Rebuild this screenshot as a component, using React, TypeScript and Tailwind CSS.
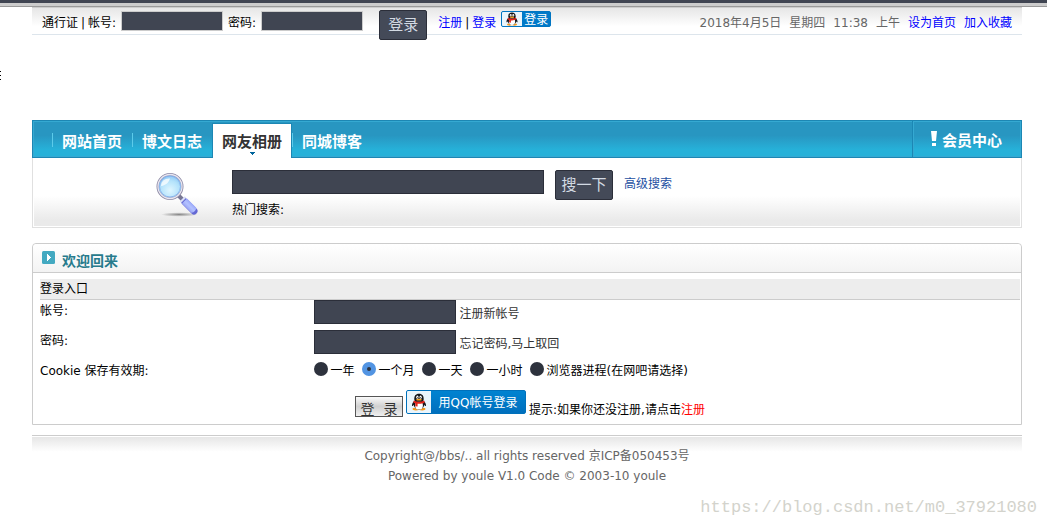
import React from "react";

interface NavItem {
  label: string;
  active?: boolean;
}

const NAV_ITEMS: NavItem[] = [
  { label: "网站首页" },
  { label: "博文日志" },
  { label: "网友相册", active: true },
  { label: "同城博客" },
];

const COOKIE_OPTIONS = [
  { value: "year", label: "一年" },
  { value: "month", label: "一个月" },
  { value: "day", label: "一天" },
  { value: "hour", label: "一小时" },
  { value: "session", label: "浏览器进程(在网吧请选择)" },
];

const Penguin: React.FC<{ className?: string }> = ({ className }) => (
  <svg viewBox="0 0 18 20" className={className} aria-hidden="true">
    <ellipse cx="5.5" cy="18" rx="3.8" ry="1.6" fill="#f39a1e" />
    <ellipse cx="12.5" cy="18" rx="3.8" ry="1.6" fill="#f39a1e" />
    <path d="M3.5 9C1.8 10.6.8 12.8 1.2 14.6c.8.2 1.6-.8 2.2-1.8zM14.5 9c1.7 1.6 2.7 3.8 2.3 5.6-.8.2-1.6-.8-2.2-1.8z" fill="#15171c" />
    <ellipse cx="9" cy="12.5" rx="6" ry="6.2" fill="#15171c" />
    <ellipse cx="9" cy="13.8" rx="4.4" ry="4.7" fill="#fff" />
    <path d="M3.8 8C3.2 3 5.3.6 9 .6S14.8 3 14.2 8c-1 2.2-9.4 2.2-10.4 0z" fill="#15171c" />
    <ellipse cx="7.2" cy="4.6" rx="1.3" ry="1.8" fill="#fff" />
    <ellipse cx="10.8" cy="4.6" rx="1.3" ry="1.8" fill="#fff" />
    <circle cx="7.6" cy="4.9" r=".6" fill="#111" />
    <circle cx="10.4" cy="4.9" r=".6" fill="#111" />
    <ellipse cx="9" cy="7.4" rx="3.2" ry="1" fill="#f6a623" />
    <path d="M3.2 8.3c3.4 2 8.2 2 11.6 0l.6 2.2c-2.4 1.4-5.4 1.8-8 1.5v3.2l-2.6-.4.1-3.3c-.8-.3-1.6-.6-2.3-1z" fill="#e2231a" />
  </svg>
);

const Magnifier: React.FC = () => (
  <svg viewBox="0 0 46 46" className="h-[46px] w-[46px]" aria-hidden="true">
    <defs>
      <radialGradient id="glass" cx=".5" cy=".65" r=".65">
        <stop offset="0" stopColor="#dff6ff" />
        <stop offset=".6" stopColor="#b3e2fb" />
        <stop offset="1" stopColor="#82bdf0" />
      </radialGradient>
      <radialGradient id="shade">
        <stop offset="0" stopColor="#888" />
        <stop offset="1" stopColor="#888" stopOpacity="0" />
      </radialGradient>
      <linearGradient id="grip" x1="0" y1="1" x2="1" y2="0">
        <stop offset="0" stopColor="#6a6ee0" />
        <stop offset=".5" stopColor="#b4c2ff" />
        <stop offset="1" stopColor="#6a78ee" />
      </linearGradient>
    </defs>
    <ellipse cx="25" cy="42.5" rx="18" ry="2.2" fill="url(#shade)" />
    <path d="M24.5 23.5l5 5" stroke="#777793" strokeWidth="4" />
    <path d="M30.5 29.5l9.500 9.500" stroke="#6468d4" strokeWidth="7" strokeLinecap="round" />
    <path d="M28 31.5l5-5 9 9c1.400 1.600-3.400 6.400-5 5z" fill="url(#grip)" />
    <path d="M26.5 30l5-5" stroke="#d9def5" strokeWidth="2" />
    <circle cx="16" cy="14.5" r="12.3" fill="url(#glass)" stroke="#8d8aa5" strokeWidth="2.4" />
    <circle cx="16" cy="14.5" r="12" fill="none" stroke="#e9e7f2" strokeWidth="1.3" />
    <circle cx="16" cy="14.5" r="10.5" fill="none" stroke="#7fa8e8" strokeWidth=".8" />
    <path d="M7 14c0-5 4-8 9-7.500-1 3.500-4 7-9 7.500z" fill="#fff" opacity=".75" />
  </svg>
);

const TopBar: React.FC = () => (
  <div className="flex h-7 items-start justify-between border-t border-b border-t-[#ccc] border-b-[#dde5ec] bg-linear-to-b from-[#e6e6e6] to-white to-70% px-2.5 leading-5">
    <form className="flex items-start pt-[3px]">
      <div className="flex gap-[3px] pt-0.5">
        <span>通行证</span>
        <span>|</span>
        <label htmlFor="top-user">帐号:</label>
      </div>
      <input id="top-user" type="text" className="mx-[5px] h-5 w-[102px] border border-[#ccc] bg-[#404552] px-1 text-white outline-none" />
      <label htmlFor="top-pass" className="pt-0.5">密码:</label>
      <input id="top-pass" type="password" className="ml-[5px] h-5 w-[102px] border border-[#ccc] bg-[#404552] px-1 text-white outline-none" />
      <button type="button" className="ml-4 -mt-px h-[30px] w-12 rounded-xs border border-[#2b2e39] bg-[#444a58] text-[15px] text-[#d3dae3]">
        登录
      </button>
      <div className="ml-[11px] flex gap-[3px] pt-0.5">
        <a href="#" className="text-[#00f]">注册</a>
        <span>|</span>
        <a href="#" className="text-[#00f]">登录</a>
      </div>
      <a href="#" className="ml-[5px] flex h-4 w-[50px] overflow-hidden rounded-xs border border-[#0075c2] bg-[#0079c8] text-white">
        <span className="flex w-5 items-end justify-center bg-[#eaf5fc]">
          <Penguin className="h-3.5 w-4" />
        </span>
        <span className="flex-1 text-center leading-4">登录</span>
      </a>
    </form>
    <div className="flex gap-2 pt-[5px] text-[#666]">
      <span>2018年4月5日</span>
      <span>星期四</span>
      <span>11:38</span>
      <span>上午</span>
      <a href="#" className="text-[#00f]">设为首页</a>
      <a href="#" className="text-[#00f]">加入收藏</a>
    </div>
  </div>
);

const NavBar: React.FC = () => (
  <nav className="flex h-[38px] justify-between border border-[#1c87b4] bg-linear-to-b from-[#2896c1] from-40% to-[#26b1d9] to-80% text-[15px] font-bold text-white inset-shadow-[0_0_0_1px_#35a9d2]">
    <div className="flex pl-[19px]">
      {NAV_ITEMS.map((item) =>
        item.active ? (
          <a
            key={item.label}
            href="#"
            className="relative mt-0.5 -mb-px w-20 border border-b-0 border-[#1c87b4] bg-white pt-2 text-center leading-5 text-[#333]"
          >
            {item.label}
            <svg viewBox="0 0 5 3" className="absolute top-7 left-[37px] h-[3px] w-[5px]" aria-hidden="true">
              <path d="M0 0h5v1H4v1H3v1H2V2H1V1H0z" fill="#00649c" />
            </svg>
          </a>
        ) : (
          <a key={item.label} href="#" className="mt-3 h-3.5 w-20 border-l border-[#5ccbea] pl-[9px] leading-5">
            <span className="-mt-px block">{item.label}</span>
          </a>
        )
      )}
    </div>
    <a href="#" className="flex w-[109px] gap-1 border-l border-[#1c87b4] pt-2.5 pl-[17px] leading-5 inset-shadow-[0_0_0_1px_#35a9d2]">
      <svg viewBox="0 0 8 16" className="h-4 w-2" aria-hidden="true">
        <path d="M1 0h6l-1 10H2zM2 12h4v3H2z" fill="#fff" />
      </svg>
      会员中心
    </a>
  </nav>
);

const SearchPanel: React.FC = () => (
  <form className="flex h-[70px] items-start border border-t-0 border-[#e0e0e0] bg-linear-to-b from-white from-55% to-[#eaeaea] to-90% pl-[121px] inset-shadow-[0_0_0_1px_#fff]">
    <div className="mt-3.5">
      <Magnifier />
    </div>
    <div className="mt-3 ml-8">
      <input type="text" aria-label="搜索" className="block h-6 w-78 border border-[#2b2e39] bg-[#404552] px-1 text-white outline-none" />
      <p className="mt-1.5 leading-5">热门搜索:</p>
    </div>
    <button type="button" className="mt-3 ml-[11px] h-[30px] w-[58px] rounded-xs border border-[#2b2e39] bg-[#444a58] text-[15px] text-[#d3dae3]">
      搜一下
    </button>
    <a href="#" className="mt-4 ml-[11px] leading-5 text-[#1e50a2]">高级搜索</a>
  </form>
);

const LoginPanel: React.FC = () => (
  <section className="mt-[15px] rounded-t-sm border border-[#ccc]">
    <h2 className="flex h-[29px] gap-[7px] rounded-t-sm border-b border-[#ccc] bg-linear-to-b from-white to-[#f3f3f3] pl-[9px] text-[14px] font-bold text-[#277b8c]">
      <svg viewBox="0 0 13 13" className="mt-[7px] h-[13px] w-[13px]" aria-hidden="true">
        <rect width="13" height="13" rx="1.5" fill="#43a9c1" />
        <path d="M5 3h1v1h1v1h1v1h1v1H8v1H7v1H6v1H5z" fill="#fff" />
      </svg>
      <span className="pt-[7px] leading-5">欢迎回来</span>
    </h2>
    <form className="mt-1.5 mr-px ml-[7px]">
      <table className="w-full table-fixed border-separate border-spacing-0 leading-5">
        <colgroup>
          <col className="w-[28%]" />
          <col />
        </colgroup>
        <thead>
          <tr>
            <th colSpan={2} className="h-[21px] border-b border-[#ccc] bg-[#ededed] p-0 pt-px text-left leading-[19px] font-normal">
              登录入口
            </th>
          </tr>
        </thead>
        <tbody>
          <tr className="h-[30px]">
            <td className="p-0 pt-px align-top">
              <label htmlFor="user">帐号:</label>
            </td>
            <td className="p-0 align-top">
              <div className="flex gap-[3px] text-[#333]">
                <input id="user" type="text" className="h-6 w-[142px] border border-[#2b2e39] bg-[#404552] px-1 text-white outline-none" />
                <a href="#" className="pt-1">注册新帐号</a>
              </div>
            </td>
          </tr>
          <tr className="h-[30px]">
            <td className="p-0 pt-px align-top">
              <label htmlFor="pass">密码:</label>
            </td>
            <td className="p-0 align-top">
              <div className="flex gap-[3px] text-[#333]">
                <input id="pass" type="password" className="h-6 w-[142px] border border-[#2b2e39] bg-[#404552] px-1 text-white outline-none" />
                <a href="#" className="pt-1">忘记密码,马上取回</a>
              </div>
            </td>
          </tr>
          <tr className="h-6">
            <td className="p-0 pt-px align-top">Cookie 保存有效期:</td>
            <td className="p-0 pt-px align-top">
              <div className="flex gap-2">
                {COOKIE_OPTIONS.map((option) => (
                  <label key={option.value} className="flex gap-0.5">
                    <input
                      type="radio"
                      name="cookie"
                      value={option.value}
                      defaultChecked={option.value === "month"}
                      className="mt-px h-3.5 w-3.5 appearance-none rounded-full bg-[#2d323d] checked:border-[5px] checked:border-[#5294e2]"
                    />
                    {option.label}
                  </label>
                ))}
              </div>
            </td>
          </tr>
          <tr className="h-10">
            <td colSpan={2} className="p-0 align-top">
              <div className="flex justify-center gap-[3px] pt-1.5">
                <button type="button" className="mt-1.5 h-[21px] w-12 border border-[#555] bg-linear-to-b from-[#fafafa] via-[#d0d0d0] to-[#f0f0f0] pt-0.5 text-[14px] leading-5 whitespace-pre text-[#333]">
                  {"登  录"}
                </button>
                <a href="#" className="flex h-6 w-30 overflow-hidden rounded-xs border border-[#0071bb] bg-linear-to-b from-[#0083d1] to-[#006fbd] text-white">
                  <span className="flex w-6 items-center justify-center bg-[#eaf5fc]">
                    <Penguin className="h-[18px] w-4" />
                  </span>
                  <span className="flex-1 text-center leading-6">用QQ帐号登录</span>
                </a>
                <span className="pt-2.5">
                  提示:如果你还没注册,请点击<a href="#" className="text-[#f00]">注册</a>
                </span>
              </div>
            </td>
          </tr>
        </tbody>
      </table>
    </form>
  </section>
);

const App: React.FC = () => (
  <div className="relative bg-white font-['DejaVu_Sans','Noto_Sans_CJK_SC',sans-serif] text-[12px] text-black">
    <div className="h-[7px] border-t-[3px] border-b border-t-[#404552] border-b-[#999] bg-[#ccc]" />
    {/* edge of the collapsed side drawer */}
    <div className="absolute top-[71px] left-0 flex w-px flex-col gap-[3px]">
      <i className="h-px bg-black" />
      <i className="h-px bg-black" />
      <i className="h-px bg-black" />
    </div>
    <div className="pr-[25px] pl-8">
      <TopBar />
      <header className="mt-[85px]">
        <NavBar />
        <SearchPanel />
      </header>
      <LoginPanel />
      <footer className="mt-2.5 border-t border-[#ccc] text-center leading-5 text-[#666]">
        <div className="mt-px bg-linear-to-b from-[#e6e6e6] to-white to-30% pt-[9px]">
          <p>Copyright@/bbs/.. all rights reserved 京ICP备050453号</p>
          <p>Powered by youle V1.0 Code © 2003-10 youle</p>
        </div>
      </footer>
    </div>
    <p className="mt-3 pr-2.5 text-right font-['Liberation_Mono',monospace] text-[17px] leading-5 text-[#d3d3cc]">
      https://blog.csdn.net/m0_37921080
    </p>
  </div>
);

export default App;
